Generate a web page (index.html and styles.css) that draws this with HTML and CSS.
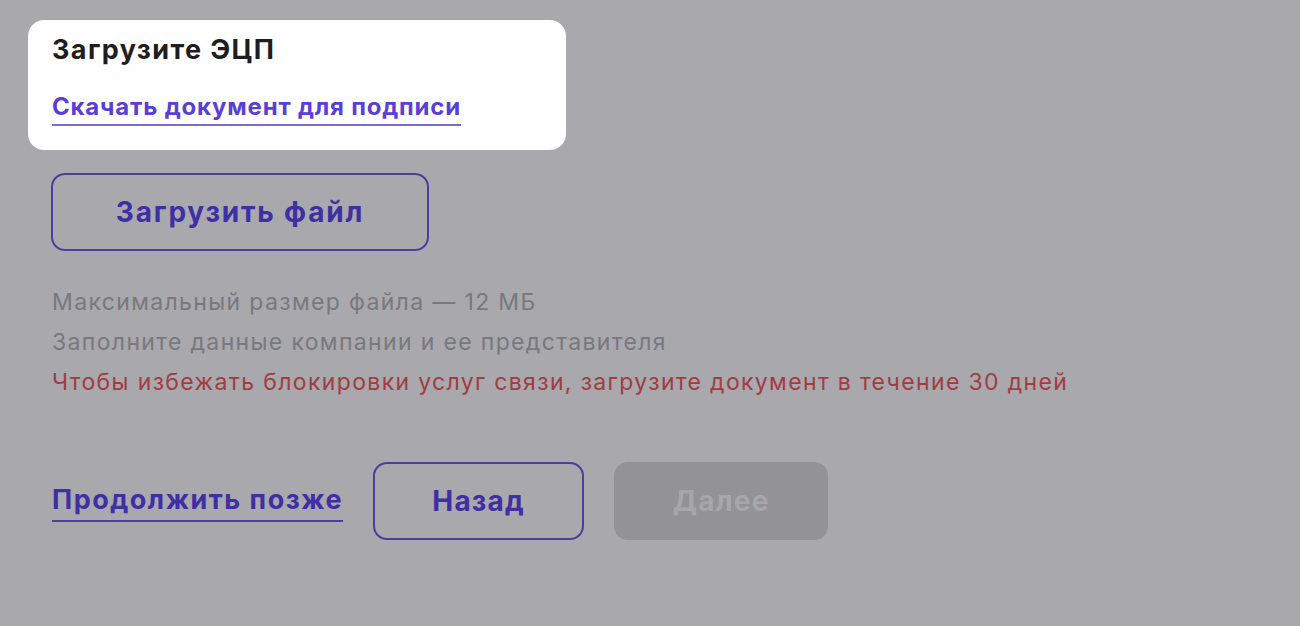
FILE: index.html
```html
<!DOCTYPE html>
<html lang="ru">
<head>
    <meta charset="UTF-8">
    <title>Загрузите ЭЦП</title>
    <link rel="stylesheet" href="styles.css">
</head>
<body>
    <div class="page">
        <div class="card">
            <h2>Загрузите ЭЦП</h2>
            <a class="link" href="#">Скачать документ для подписи</a>
        </div>

        <button class="btn upload" type="button">Загрузить файл</button>

        <div class="notes">
            <p>Максимальный размер файла — 12 МБ</p>
            <p>Заполните данные компании и ее представителя</p>
            <p class="warn">Чтобы избежать блокировки услуг связи, загрузите документ в течение 30 дней</p>
        </div>

        <div class="actions">
            <a class="link later" href="#">Продолжить позже</a>
            <button class="btn back" type="button">Назад</button>
            <button class="btn next" type="button" disabled>Далее</button>
        </div>
    </div>
</body>
</html>
```

FILE: styles.css
```css
body {
    margin: 0;
    background: #a8a8ad;
    font-family: Inter, sans-serif;
    color: #78787e;
}
.page {
    padding: 20px 0 0 52px;
}
.card {
    box-sizing: border-box;
    width: 538px;
    height: 130px;
    margin-left: -24px;
    padding: 14px 24px 0;
    background: #fefefe;
    border-radius: 16px;
}
h2 {
    margin: 0 0 26px;
    font-size: 27px;
    line-height: 32px;
    font-weight: 700;
    letter-spacing: 1.4px;
    color: #1e1e22;
}
.link {
    font-weight: 700;
    font-size: 24px;
    line-height: 30px;
    letter-spacing: 0.8px;
    color: #5a3fd6;
    text-decoration: none;
    border-bottom: 2px solid #7a6ad8;
    padding-bottom: 3px;
}
.btn {
    box-sizing: border-box;
    height: 78px;
    font-family: Inter, sans-serif;
    font-weight: 700;
    font-size: 28px;
    letter-spacing: 1.2px;
    color: #3e2fa3;
    background: transparent;
    border: 2px solid #4b3e9e;
    border-radius: 14px;
}
.upload {
    display: block;
    width: 378px;
    margin: 23px 0 0 -1px;
    letter-spacing: 1.8px;
}
.notes {
    margin-top: 31px;
}
.notes p {
    margin: 0;
    font-size: 23px;
    line-height: 40px;
    letter-spacing: 1.35px;
}
.notes .warn {
    color: #a23c42;
}
.actions {
    display: flex;
    align-items: center;
    gap: 30px;
    margin-top: 60px;
}
.actions .later {
    margin-top: 4px;
    padding-bottom: 5px;
    font-size: 27px;
    letter-spacing: 1.5px;
    color: #3e2fa3;
    border-bottom-color: #4b3e9e;
}
.back {
    width: 211px;
}
.next {
    width: 214px;
    background: #929297;
    border-color: transparent;
    color: #a6a6ab;
}
```
